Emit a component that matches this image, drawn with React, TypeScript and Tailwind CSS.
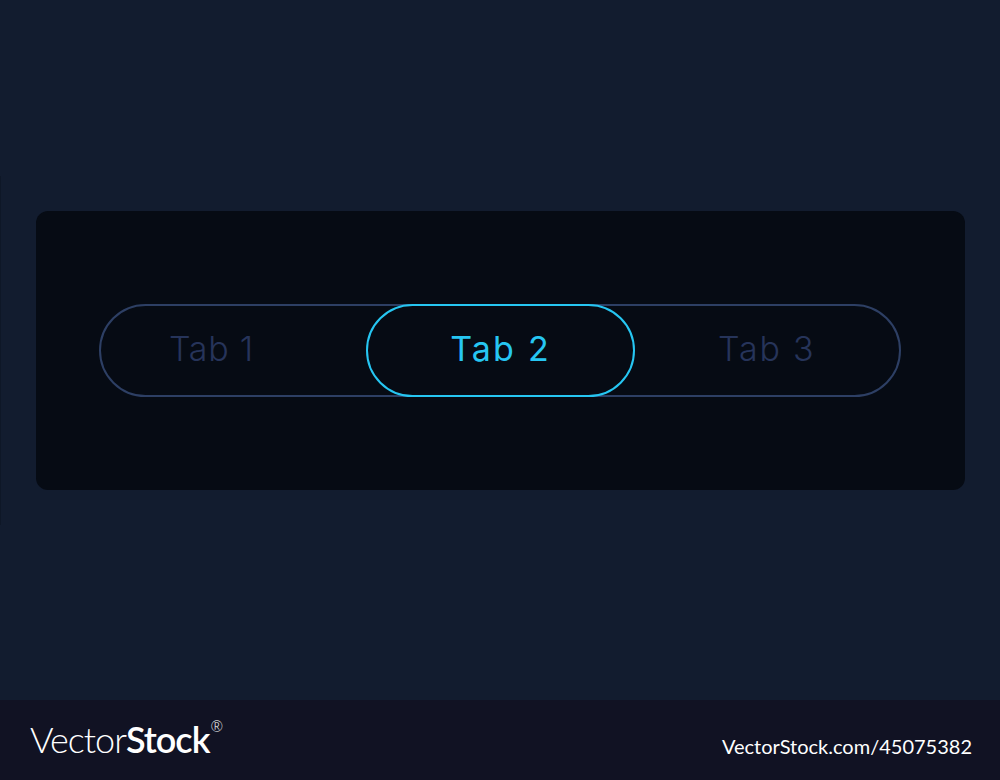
const font = { fontFamily: '"Inter", "Liberation Sans", sans-serif' }

export default function App() {
  return (
    <div className="w-[1000px] h-[780px] flex flex-col bg-[#121c2f] overflow-hidden" style={font}>
      <main className="h-[700px] flex items-center">
        <div className="w-px h-[349px] bg-[#0e1727]" />
        <section className="ml-[35px] w-[929px] h-[279px] rounded-xl bg-[#060b14] flex items-center pl-[63px]">
          <div className="w-[802px] h-[93px] flex rounded-full border-2 border-[#2d3f64]">
            <div className="w-[265px] h-full flex items-center pl-[68px] pb-[4px]">
              <span className="text-[34px] font-light text-[#26345a] tracking-[0.7px]">Tab 1</span>
            </div>
            <div className="w-[269px] h-[93px] -my-[2px] flex items-center justify-center rounded-full border-2 border-[#26c6f2] bg-[#060b14] pb-[4px]">
              <span className="text-[34px] font-normal text-[#26c6f2] tracking-[2.2px]">Tab 2</span>
            </div>
            <div className="flex-1 h-full flex items-center pl-[83px] pb-[4px]">
              <span className="text-[34px] font-light text-[#26345a] tracking-[1.8px]">Tab 3</span>
            </div>
          </div>
        </section>
      </main>
      <footer className="h-[80px] bg-[#111223] flex items-center justify-between pl-[30px] pr-[28px] text-white font-['Lato',sans-serif]">
        <div className="flex items-start -mt-[2px]">
          <span className="text-[36px] leading-none tracking-[-1px]">
            <span className="font-light">Vector</span>
            <span className="font-semibold">Stock</span>
          </span>
          <span className="text-[15px] leading-none font-light -mt-[2px] ml-[1px]">®</span>
        </div>
        <span className="text-[20px] leading-none mt-[12px]">VectorStock.com/45075382</span>
      </footer>
    </div>
  )
}
